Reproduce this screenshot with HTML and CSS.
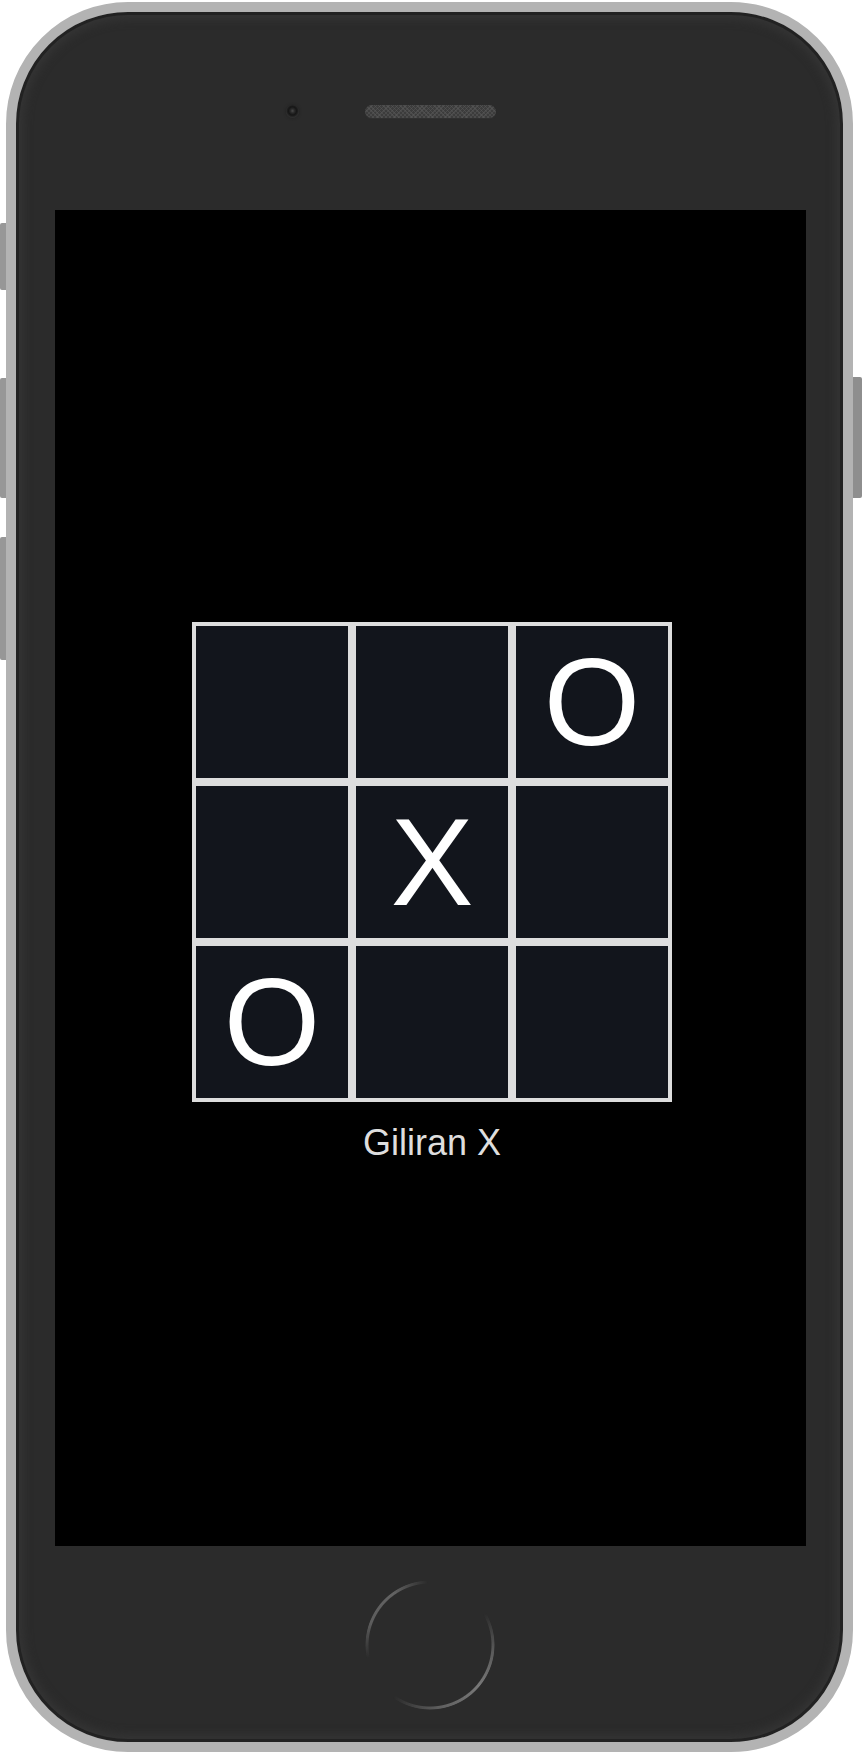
FILE: index.html
```html
<!DOCTYPE html>
<html lang="id">
<head>
<meta charset="utf-8">
<title>Tic Tac Toe</title>
<link rel="stylesheet" href="styles.css">
</head>
<body>
<div class="device">
  <div class="side-btn left b1"></div>
  <div class="side-btn left b2"></div>
  <div class="side-btn left b3"></div>
  <div class="side-btn right b4"></div>
  <div class="phone">
    <div class="top-bar">
      <div class="cam-slot"><div class="camera"></div></div>
      <div class="speaker"></div>
      <div class="spacer"></div>
    </div>
    <div class="screen">
      <div class="board">
        <div class="cell"></div>
        <div class="cell"></div>
        <div class="cell">O</div>
        <div class="cell"></div>
        <div class="cell">X</div>
        <div class="cell"></div>
        <div class="cell">O</div>
        <div class="cell"></div>
        <div class="cell"></div>
      </div>
      <div class="status">Giliran X</div>
    </div>
    <div class="bottom-bar">
      <div class="home"></div>
    </div>
  </div>
</div>
</body>
</html>
```

FILE: styles.css
```css
* { box-sizing: border-box; }

html, body {
  margin: 0;
  padding: 0;
  background: #ffffff;
}

.device {
  position: relative;
  width: 862px;
  height: 1754px;
  padding: 2px 9px 2px 6px;
}

.side-btn {
  position: absolute;
  background: #979797;
}
.side-btn.left { left: 0; width: 7px; border-radius: 2px 0 0 2px; }
.side-btn.right { right: 0; width: 10px; border-radius: 0 2px 2px 0; background: #8e8e8e; }
.b1 { top: 223px; height: 67px; }
.b2 { top: 378px; height: 120px; }
.b3 { top: 537px; height: 123px; }
.b4 { top: 377px; height: 121px; }

.phone {
  position: relative;
  width: 847px;
  height: 1750px;
  border: 10px solid #b3b3b3;
  border-radius: 122px;
  background: #2b2b2b;
  box-shadow: inset 0 0 0 3px #222222, inset 0 0 10px 7px #353535;
  display: flex;
  flex-direction: column;
  padding: 0 38px 0 39px;
}

.top-bar {
  height: 198px;
  display: grid;
  grid-template-columns: 1fr auto 1fr;
  align-items: center;
}

.cam-slot {
  display: flex;
  justify-content: flex-end;
  padding-right: 66px;
}

.camera {
  width: 13px;
  height: 13px;
  border-radius: 50%;
  background: radial-gradient(circle at 50% 45%, #4a4a4a 0, #2a2a2a 2px, #161616 4px, #1c1c1c 5px, #2e2e2e 6.5px);
  box-shadow: 0 0 2px 1px #262626;
}

.speaker {
  width: 131px;
  height: 13px;
  border-radius: 7px;
  background-color: #3c3c3c;
  background-image:
    repeating-linear-gradient(45deg, rgba(90,90,90,0.5) 0 1px, transparent 1px 3px),
    repeating-linear-gradient(-45deg, rgba(90,90,90,0.5) 0 1px, transparent 1px 3px);
  box-shadow: 0 1px 1px #303030;
}

.screen {
  width: 751px;
  height: 1336px;
  background: #000000;
  display: flex;
  flex-direction: column;
  align-items: center;
  padding-top: 412px;
  padding-left: 3px;
}

.board {
  display: grid;
  grid-template-columns: repeat(3, 160px);
  grid-template-rows: repeat(3, 160px);
}

.cell {
  border: 4px solid #dddddd;
  background: #12151c;
  color: #ffffff;
  font-family: "Liberation Sans", Arial, sans-serif;
  font-size: 124px;
  line-height: 1;
  display: flex;
  align-items: center;
  justify-content: center;
}

.status {
  margin-top: 20px;
  font-family: "Liberation Sans", Arial, sans-serif;
  font-size: 36px;
  color: #dedede;
}

.bottom-bar {
  flex: 1;
  display: flex;
  align-items: center;
  justify-content: center;
  padding-top: 2px;
}

.home {
  width: 130px;
  height: 130px;
  border-radius: 50%;
  background: conic-gradient(
    from 0deg,
    rgba(110,110,110,0.0) 0deg,
    rgba(110,110,110,0.0) 60deg,
    rgba(110,110,110,0.7) 95deg,
    rgba(120,120,120,1) 130deg,
    rgba(110,110,110,0.8) 170deg,
    rgba(110,110,110,0.0) 215deg,
    rgba(110,110,110,0.0) 258deg,
    rgba(105,105,105,0.8) 290deg,
    rgba(105,105,105,0.9) 325deg,
    rgba(100,100,100,0.0) 358deg
  );
  -webkit-mask: radial-gradient(circle, transparent 61px, #000 62px, #000 64px, transparent 65px);
  mask: radial-gradient(circle, transparent 61px, #000 62px, #000 64px, transparent 65px);
}
```
